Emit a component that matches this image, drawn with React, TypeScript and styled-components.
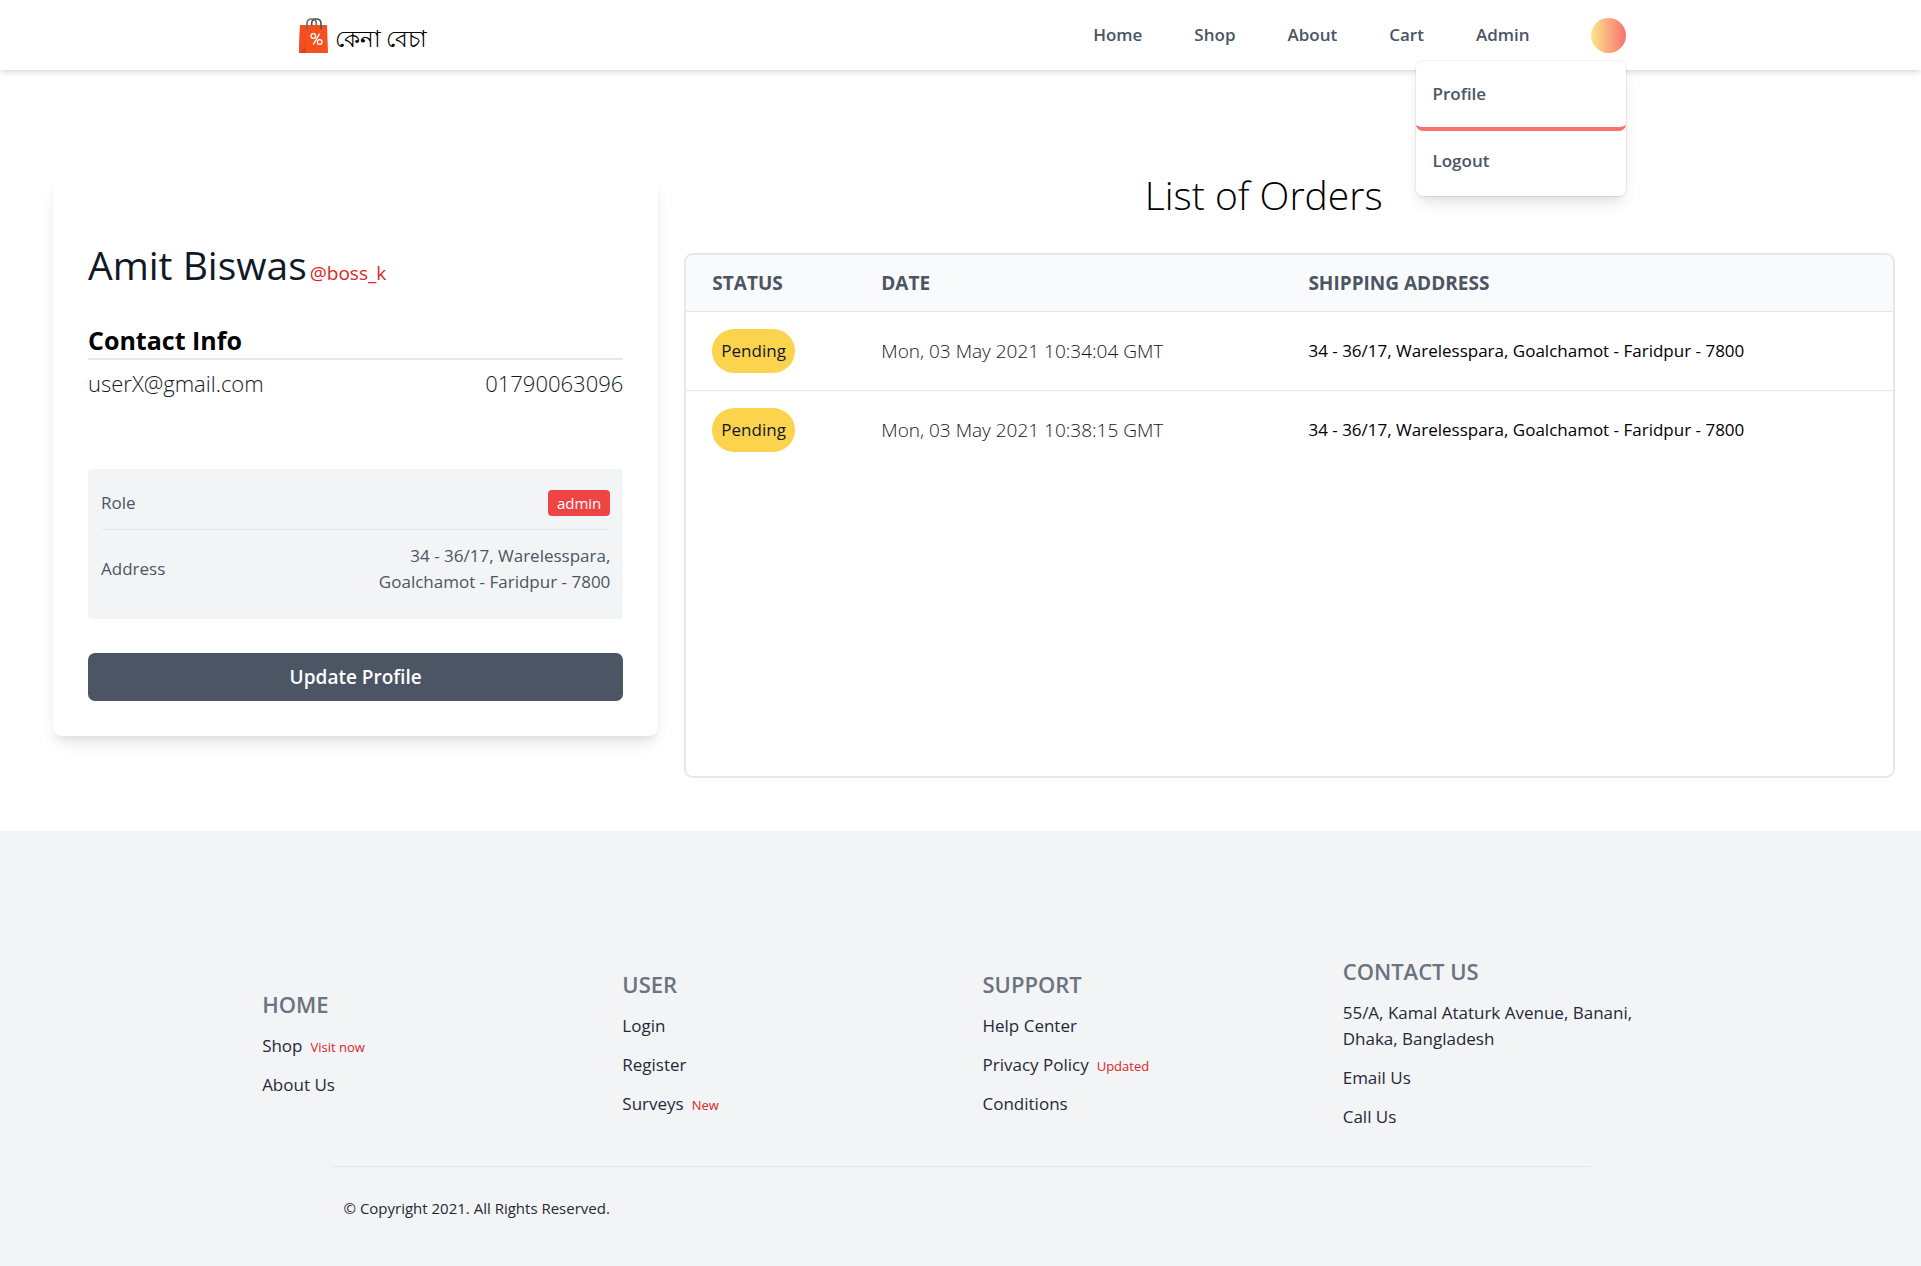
import React from "react";
import styled, { createGlobalStyle } from "styled-components";

const color = {
  ink: "#111827",
  text: "#1f2937",
  slate: "#4b5563",
  muted: "#6b7280",
  line: "#e5e7eb",
  panel: "#f3f4f6",
  red: "#dc2626",
};

const GlobalStyle = createGlobalStyle`
  *, *::before, *::after { box-sizing: border-box; }
  body {
    margin: 0;
    background: #fff;
    color: #000;
    font-family: "Open Sans", "Noto Sans", sans-serif;
    font-size: 17px;
    line-height: 26px;
  }
  h1, h2, h3, p, ul { margin: 0; padding: 0; }
  ul { list-style: none; }
  a { color: inherit; text-decoration: none; }
  button { font-family: inherit; cursor: pointer; }
`;

const Header = styled.header`
  position: relative;
  z-index: 10;
  background: #fff;
  box-shadow: 0 4px 6px -1px rgba(0, 0, 0, 0.1), 0 2px 4px -1px rgba(0, 0, 0, 0.06);
`;

const HeaderInner = styled.div`
  display: flex;
  align-items: center;
  justify-content: space-between;
  max-width: 1330px;
  height: 70px;
  margin: 0 auto;
`;

const Brand = styled.a`
  display: flex;
  align-items: flex-end;
  gap: 7px;
  padding-left: 3px;
  font-size: 23px;
  line-height: 29px;
`;

const Nav = styled.nav`
  display: flex;
  align-items: center;
  gap: 52px;
  color: ${color.slate};
  font-weight: 600;
`;

const Account = styled.div`
  position: relative;
  display: flex;
  margin-left: 9px;
`;

const Avatar = styled.button`
  width: 35px;
  height: 35px;
  padding: 0;
  border: 0;
  border-radius: 50%;
  background: linear-gradient(to right, #fde68a, #f87171);
`;

const Menu = styled.ul`
  position: absolute;
  top: 43px;
  right: 0;
  width: 210px;
  padding: 3px 0 2px;
  border-radius: 7px;
  background: #fff;
  box-shadow: 0 0 0 1px rgba(0, 0, 0, 0.05), 0 10px 15px -3px rgba(0, 0, 0, 0.1),
    0 4px 6px -2px rgba(0, 0, 0, 0.05);
`;

const MenuLink = styled.a<{ $active?: boolean }>`
  display: block;
  padding: 17px 17px 20px;
  border-radius: 7px;
  border-bottom: ${(p) => (p.$active ? "4px solid #f87171" : "0")};
`;

const Main = styled.main`
  display: grid;
  grid-template-columns: minmax(0, 1fr) minmax(0, 2fr);
  align-items: start;
  gap: 26px;
  padding: 105px 26px 53px 53px;
`;

const Card = styled.section`
  padding: 64px 35px 35px;
  border-radius: 9px;
  background: #fff;
  box-shadow: 0 10px 15px -3px rgba(0, 0, 0, 0.1), 0 4px 6px -2px rgba(0, 0, 0, 0.05);
`;

const Name = styled.h1`
  color: ${color.ink};
  font-size: 39px;
  font-weight: 400;
  line-height: 52px;
`;

const Handle = styled.span`
  margin-left: 3px;
  color: ${color.red};
  font-size: 19px;
`;

const CardTitle = styled.h2`
  margin-top: 24px;
  border-bottom: 2px solid ${color.line};
  font-size: 25px;
  font-weight: 700;
  line-height: 35px;
`;

const Contact = styled.div`
  display: flex;
  justify-content: space-between;
  margin-top: 8px;
  color: ${color.ink};
  font-size: 22px;
  font-weight: 300;
  line-height: 31px;
`;

const Details = styled.dl`
  margin: 70px 0 34px;
  padding: 8px 13px 11px;
  border-radius: 4px;
  background: ${color.panel};
  color: ${color.slate};
`;

const Detail = styled.div`
  display: flex;
  align-items: center;
  justify-content: space-between;
  padding: 13px 0;

  & + & {
    border-top: 1px solid ${color.line};
  }
  dd {
    max-width: 240px;
    margin: 0;
    text-align: right;
  }
`;

const RoleBadge = styled.span`
  display: block;
  padding: 0 9px;
  border-radius: 4px;
  background: #ef4444;
  color: #fff;
  font-size: 15px;
`;

const UpdateButton = styled.button`
  display: block;
  width: 100%;
  height: 48px;
  border: 0;
  border-radius: 7px;
  background: ${color.slate};
  color: #fff;
  font-size: 19px;
  font-weight: 600;
`;

const OrdersTitle = styled.h2`
  margin-bottom: 38px;
  padding-right: 52px;
  font-size: 39px;
  font-weight: 300;
  line-height: 40px;
  text-align: center;
`;

const OrdersPanel = styled.div`
  min-height: 525px;
  overflow: hidden;
  border: 2px solid ${color.line};
  border-radius: 9px;
`;

const Table = styled.table`
  width: 100%;
  border-collapse: collapse;
  table-layout: fixed;
  text-align: left;

  th {
    padding: 15px 26px;
    background: #f9fafb;
    color: ${color.slate};
    font-size: 19px;
    font-weight: 700;
    text-transform: uppercase;
  }
  th:nth-child(1) { width: 14%; }
  th:nth-child(2) { width: 35.4%; }
  td { padding: 17px 26px; }
  tbody tr { border-top: 1px solid ${color.line}; }
`;

const Status = styled.span`
  display: inline-block;
  padding: 9px;
  border-radius: 22px;
  background: #fcd34d;
  color: ${color.ink};
  vertical-align: top;
`;

const OrderDate = styled.time`
  color: ${color.ink};
  font-size: 19px;
  font-weight: 300;
`;

const Footer = styled.footer`
  padding: 124px 0 45px;
  background: ${color.panel};
  color: ${color.text};
`;

const FooterGrid = styled.div`
  display: grid;
  grid-template-columns: repeat(4, minmax(0, 1fr));
  align-items: center;
  width: 75%;
  margin: 0 auto;
`;

const FooterColumn = styled.section`
  padding: 0 22px;
`;

const FooterTitle = styled.h3`
  color: ${color.muted};
  font-size: 22px;
  font-weight: 600;
  line-height: 32px;
  text-transform: uppercase;
`;

const FooterItem = styled.li`
  margin-top: 13px;
`;

const Note = styled.span`
  margin-left: 8px;
  color: ${color.red};
  font-size: 13px;
  line-height: 16px;
`;

const Legal = styled.div`
  width: 1260px;
  max-width: 100%;
  margin: 36px auto 0;
  padding: 28px 13px 0;
  border-top: 1px solid ${color.line};
  font-size: 15px;
`;

const BagIcon = () => (
  <svg width="29" height="35" viewBox="0 0 87 105" aria-hidden="true">
    <path d="M3 21 H84 L87 105 H0 Z" fill="#f4511e" />
    <path d="M3 21 H21 V86 L0 105 Z" fill="#f04e23" />
    <path d="M0 105 L21 86 V105 Z" fill="#d8431b" />
    <path d="M24 34 V16 Q24 3 38 3 Q52 3 52 16 V22" fill="none" stroke="#6b6b6b" strokeWidth="5" />
    <path d="M38 22 V16 Q38 3 52 3 Q66 3 66 16 V34" fill="none" stroke="#555" strokeWidth="5" />
    <g fill="none" stroke="#fff" strokeWidth="4">
      <circle cx="43" cy="54" r="7" />
      <circle cx="62" cy="72" r="7" />
      <path d="M62 47 L43 79" />
    </g>
  </svg>
);

const navLinks = ["Home", "Shop", "About", "Cart", "Admin"];
const address = "34 - 36/17, Warelesspara, Goalchamot - Faridpur - 7800";
const orders = ["Mon, 03 May 2021 10:34:04 GMT", "Mon, 03 May 2021 10:38:15 GMT"];

const footerColumns: { title: string; items: { label: string; note?: string; plain?: boolean }[] }[] = [
  { title: "Home", items: [{ label: "Shop", note: "Visit now" }, { label: "About Us" }] },
  { title: "User", items: [{ label: "Login" }, { label: "Register" }, { label: "Surveys", note: "New" }] },
  {
    title: "Support",
    items: [{ label: "Help Center" }, { label: "Privacy Policy", note: "Updated" }, { label: "Conditions" }],
  },
  {
    title: "Contact us",
    items: [
      { label: "55/A, Kamal Ataturk Avenue, Banani, Dhaka, Bangladesh", plain: true },
      { label: "Email Us" },
      { label: "Call Us" },
    ],
  },
];

export default function App() {
  return (
    <>
      <GlobalStyle />
      <Header>
        <HeaderInner>
          <Brand href="#" lang="bn">
            <BagIcon />
            <span>কেনা বেচা</span>
          </Brand>
          <Nav>
            {navLinks.map((label) => (
              <a key={label} href="#">{label}</a>
            ))}
            <Account>
              <Avatar type="button" aria-label="Account menu" aria-expanded="true" />
              <Menu>
                <li><MenuLink href="#" $active>Profile</MenuLink></li>
                <li><MenuLink href="#">Logout</MenuLink></li>
              </Menu>
            </Account>
          </Nav>
        </HeaderInner>
      </Header>

      <Main>
        <Card>
          <Name>
            Amit Biswas
            <Handle>@boss_k</Handle>
          </Name>
          <CardTitle>Contact Info</CardTitle>
          <Contact>
            <span>userX@gmail.com</span>
            <span>01790063096</span>
          </Contact>
          <Details>
            <Detail>
              <dt>Role</dt>
              <dd><RoleBadge>admin</RoleBadge></dd>
            </Detail>
            <Detail>
              <dt>Address</dt>
              <dd>{address}</dd>
            </Detail>
          </Details>
          <UpdateButton type="button">Update Profile</UpdateButton>
        </Card>

        <section>
          <OrdersTitle>List of Orders</OrdersTitle>
          <OrdersPanel>
            <Table>
              <thead>
                <tr>
                  <th scope="col">Status</th>
                  <th scope="col">Date</th>
                  <th scope="col">Shipping Address</th>
                </tr>
              </thead>
              <tbody>
                {orders.map((date) => (
                  <tr key={date}>
                    <td><Status>Pending</Status></td>
                    <td><OrderDate>{date}</OrderDate></td>
                    <td>{address}</td>
                  </tr>
                ))}
              </tbody>
            </Table>
          </OrdersPanel>
        </section>
      </Main>

      <Footer>
        <FooterGrid>
          {footerColumns.map((column) => (
            <FooterColumn key={column.title}>
              <FooterTitle>{column.title}</FooterTitle>
              <ul>
                {column.items.map((item) => (
                  <FooterItem key={item.label}>
                    {item.plain ? item.label : <a href="#">{item.label}</a>}
                    {item.note && <Note>{item.note}</Note>}
                  </FooterItem>
                ))}
              </ul>
            </FooterColumn>
          ))}
        </FooterGrid>
        <Legal>© Copyright 2021. All Rights Reserved.</Legal>
      </Footer>
    </>
  );
}
